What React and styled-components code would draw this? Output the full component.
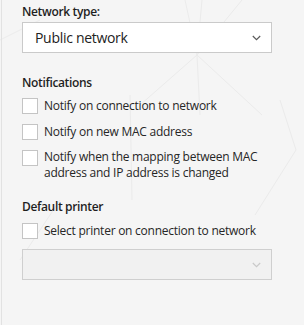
import React from "react";
import styled, { createGlobalStyle } from "styled-components";

const Global = createGlobalStyle`
  html, body { margin: 0; padding: 0; background: #f5f5f5; }
  body { font-family: "Open Sans", "Noto Sans", sans-serif; color: #1e1e1e; }
  * { box-sizing: border-box; }
`;

const Page = styled.div`
  position: relative;
  width: 304px;
  height: 325px;
  overflow: hidden;
  background: #f5f5f5;
`;

const Backdrop = styled.svg`
  position: absolute;
  inset: 0;
  width: 304px;
  height: 325px;
  z-index: 0;
`;

const Panel = styled.div`
  position: relative;
  z-index: 1;
  margin-left: 1px;
  height: 325px;
  border-left: 1px solid #e2e2e2;
  padding: 4px 0 0 20px;
  display: flex;
  flex-direction: column;
`;

const Heading = styled.div`
  font-size: 12px;
  font-weight: 600;
  line-height: 16px;
  height: 16px;
  letter-spacing: -0.35px;
  color: #1f1f1f;
  margin-top: ${(p) => p.$top || 0}px;
`;

const Select = styled.div`
  width: 250px;
  height: 31px;
  margin-top: ${(p) => p.$top || 0}px;
  border: 1px solid ${(p) => (p.$disabled ? "#cfcfcf" : "#cacaca")};
  background: ${(p) => (p.$disabled ? "#f1f1f1" : "#ffffff")};
  display: flex;
  align-items: center;
  justify-content: space-between;
  padding: 0 10px 0 12px;
  font-size: 14px;
  letter-spacing: -0.3px;
  color: #222;
`;

const Chevron = ({ color }) => (
  <svg width="9" height="6" viewBox="0 0 9 6">
    <path d="M0.8 1 L4.5 4.6 L8.2 1" fill="none" stroke={color} strokeWidth="1.2" />
  </svg>
);

const List = styled.div`
  display: flex;
  flex-direction: column;
  gap: 10px;
  margin-top: ${(p) => p.$top || 0}px;
`;

const Row = styled.label`
  display: flex;
  align-items: flex-start;
  gap: 6px;
  font-size: 12px;
  line-height: 16px;
  letter-spacing: -0.25px;
  color: #262626;
  min-height: 16px;
`;

const Box = styled.span`
  flex: none;
  width: 16px;
  height: 16px;
  border: 1px solid #c4c4c4;
  background: #ffffff;
`;

const Text = styled.span`
  width: 222px;
  margin-top: ${(p) => p.$off || 0}px;
`;

export default function App() {
  return (
    <Page>
      <Global />
      <Backdrop viewBox="0 0 304 325">
        <g stroke="#ebebeb" strokeWidth="1" fill="none">
          <line x1="185" y1="0" x2="197" y2="55" />
          <line x1="202" y1="0" x2="197" y2="55" />
          <line x1="242" y1="0" x2="197" y2="55" />
          <line x1="197" y1="55" x2="140" y2="105" />
          <line x1="197" y1="55" x2="200" y2="115" />
          <line x1="197" y1="55" x2="262" y2="115" />
          <line x1="280" y1="100" x2="296" y2="150" />
          <line x1="296" y1="150" x2="255" y2="215" />
          <line x1="130" y1="95" x2="132" y2="200" />
          <line x1="0" y1="40" x2="40" y2="20" />
          <line x1="60" y1="200" x2="20" y2="260" />
        </g>
      </Backdrop>
      <Panel>
        <Heading>Network type:</Heading>
        <Select $top={2}>
          <span>Public network</span>
          <Chevron color="#5a5a5a" />
        </Select>

        <Heading $top={22}>Notifications</Heading>
        <List $top={7}>
          <Row>
            <Box />
            <Text>Notify on connection to network</Text>
          </Row>
          <Row>
            <Box />
            <Text>Notify on new MAC address</Text>
          </Row>
          <Row>
            <Box />
            <Text $off={-1}>
              Notify when the mapping between MAC address and IP address is changed
            </Text>
          </Row>
        </List>

        <Heading $top={18}>Default printer</Heading>
        <List $top={8}>
          <Row>
            <Box />
            <Text>Select printer on connection to network</Text>
          </Row>
        </List>
        <Select $top={10} $disabled>
          <span />
          <Chevron color="#c9c9c9" />
        </Select>
      </Panel>
    </Page>
  );
}
